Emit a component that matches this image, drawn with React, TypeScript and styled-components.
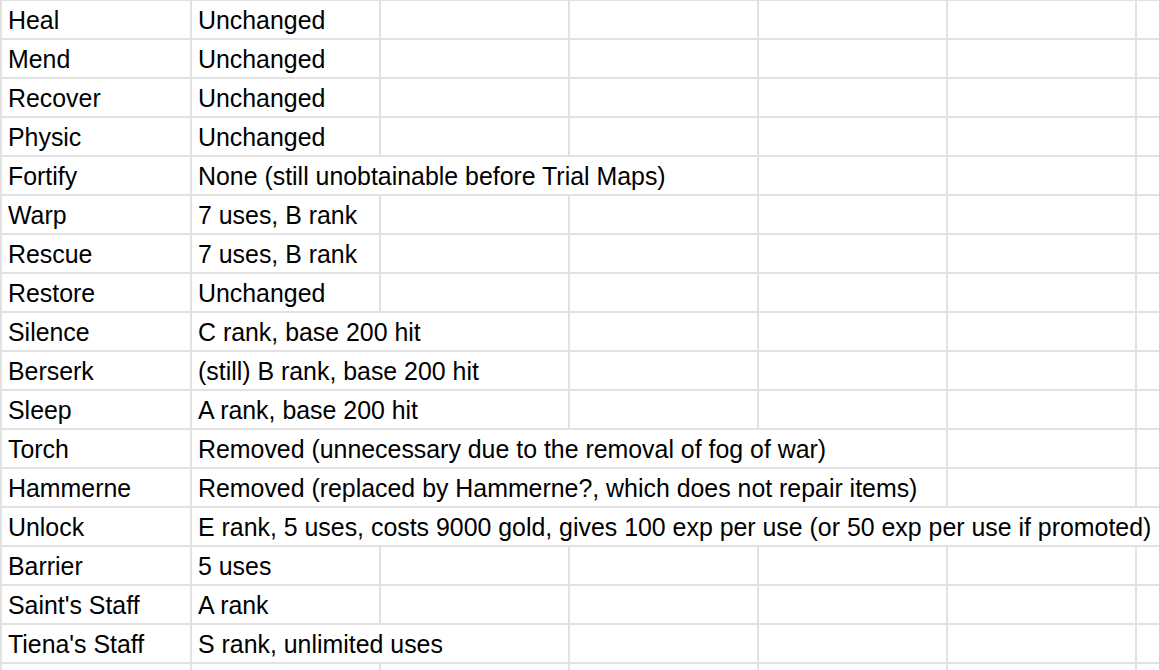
import React from 'react';
import styled, { createGlobalStyle } from 'styled-components';

const GlobalStyle = createGlobalStyle`
  html, body {
    margin: 0;
    padding: 0;
    background: #ffffff;
    overflow: hidden;
  }
`;

const Sheet = styled.div`
  margin-top: -1px;
  border-top: 2px solid #e2e2e2;
  border-left: 2px solid #e2e2e2;
  font-family: 'Liberation Sans', Arial, sans-serif;
  font-size: 24.9px;
  color: #000000;
  overflow: hidden;
`;

const Row = styled.div`
  display: grid;
  grid-template-columns: 190px repeat(5, 189px) minmax(0, 1fr);
  height: 39px;
`;

const Cell = styled.div<{ span?: number }>`
  grid-column: span ${props => props.span || 1};
  box-sizing: border-box;
  height: 39px;
  min-width: 0;
  border-right: 2px solid #e2e2e2;
  border-bottom: 2px solid #e2e2e2;
  padding: 0 0 3px 6px;
  display: flex;
  align-items: flex-end;
  white-space: nowrap;
  overflow: hidden;

  &:last-child {
    border-right: none;
  }
`;

type Staff = { name: string; change: string; span: number };

const staves: Staff[] = [
  { name: 'Heal', change: 'Unchanged', span: 1 },
  { name: 'Mend', change: 'Unchanged', span: 1 },
  { name: 'Recover', change: 'Unchanged', span: 1 },
  { name: 'Physic', change: 'Unchanged', span: 1 },
  { name: 'Fortify', change: 'None (still unobtainable before Trial Maps)', span: 3 },
  { name: 'Warp', change: '7 uses, B rank', span: 1 },
  { name: 'Rescue', change: '7 uses, B rank', span: 1 },
  { name: 'Restore', change: 'Unchanged', span: 1 },
  { name: 'Silence', change: 'C rank, base 200 hit', span: 2 },
  { name: 'Berserk', change: '(still) B rank, base 200 hit', span: 2 },
  { name: 'Sleep', change: 'A rank, base 200 hit', span: 2 },
  { name: 'Torch', change: 'Removed (unnecessary due to the removal of fog of war)', span: 4 },
  { name: 'Hammerne', change: 'Removed (replaced by Hammerne?, which does not repair items)', span: 4 },
  {
    name: 'Unlock',
    change: 'E rank, 5 uses, costs 9000 gold, gives 100 exp per use (or 50 exp per use if promoted)',
    span: 6,
  },
  { name: 'Barrier', change: '5 uses', span: 1 },
  { name: "Saint's Staff", change: 'A rank', span: 1 },
  { name: "Tiena's Staff", change: 'S rank, unlimited uses', span: 2 },
  { name: '', change: '', span: 1 },
];

const App: React.FC = () => {
  return (
    <>
      <GlobalStyle />
      <Sheet>
        {staves.map((s, i) => (
          <Row key={i}>
            <Cell>{s.name}</Cell>
            <Cell span={s.span}>{s.change}</Cell>
            {Array.from({ length: 6 - s.span }).map((_, j) => (
              <Cell key={j} />
            ))}
          </Row>
        ))}
      </Sheet>
    </>
  );
};

export default App;
